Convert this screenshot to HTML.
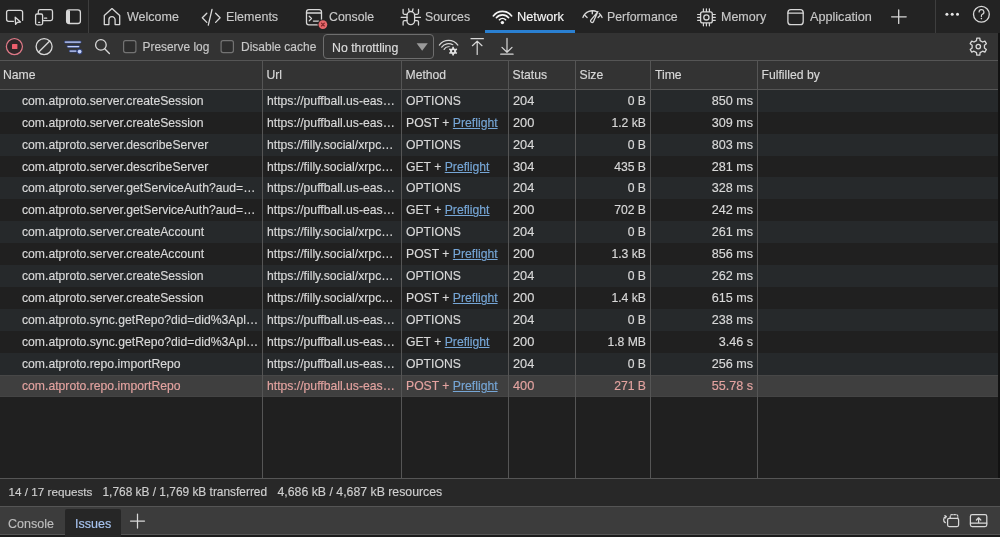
<!DOCTYPE html>
<html><head><meta charset="utf-8">
<style>
*{box-sizing:border-box;margin:0;padding:0}
html,body{width:1000px;height:537px;overflow:hidden;background:#202020;font-family:"Liberation Sans",sans-serif;color:#d9d9d9}
#wrap{position:absolute;left:0;top:0;width:1000px;height:537px;will-change:transform}
.abs{position:absolute}
svg{position:absolute;left:0;top:0;overflow:visible}
.t{position:absolute;font-size:12.5px;color:#c8c8c8;white-space:nowrap;line-height:14px;-webkit-text-stroke:0.15px currentColor}
#tabbar{position:absolute;left:0;top:0;width:1000px;height:33px;background:#232323}
#toolbar{position:absolute;left:0;top:33px;width:1000px;height:27px;background:#333333}
#hdr{position:absolute;left:0;top:60px;width:1000px;height:30px;background:#333333;border-top:1px solid #555555;border-bottom:1px solid #555555}
.row{position:absolute;left:0;width:1000px;height:21.97px}
.odd{background:#26292b}
.even{background:#202020}
.sel{background:#3f3f3f;box-shadow:inset 0 1px 0 #474747,inset 0 -1px 0 #444}
.c{position:absolute;top:0;height:22px;line-height:22px;font-size:12.2px;color:#d9d9d9;white-space:nowrap;-webkit-text-stroke:0.15px currentColor}
.hc{position:absolute;top:0;height:27px;line-height:28px;font-size:12.2px;color:#d9d9d9;white-space:nowrap;-webkit-text-stroke:0.15px currentColor}
.r{text-align:right}
.n{font-size:12.8px}
.sel .c{color:#e3a3a0}
.lnk{color:#76a6d6;text-decoration:underline;text-underline-offset:1px}
.vsep{position:absolute;top:60px;width:1px;height:418px;background:#555555}
#status{position:absolute;left:0;top:478px;width:1000px;height:28px;background:#282828;border-top:1px solid #555555}
#drawer{position:absolute;left:0;top:506px;width:1000px;height:31px;background:#3c3c3c;border-top:1px solid #555555}
</style></head><body><div id="wrap">
<div id="tabbar"></div>
<div id="toolbar"></div>
<div id="hdr">
  <div class="hc" style="left:3px">Name</div>
  <div class="hc" style="left:266.5px">Url</div>
  <div class="hc" style="left:405.5px">Method</div>
  <div class="hc" style="left:512.5px">Status</div>
  <div class="hc" style="left:579.5px">Size</div>
  <div class="hc" style="left:655px">Time</div>
  <div class="hc" style="left:761.5px">Fulfilled by</div>
</div>
<div class="row odd" style="top:89.6px"><div class="c" style="left:22px">com.atproto.server.createSession</div><div class="c" style="left:267px">https://puffball.us-eas…</div><div class="c" style="left:406px">OPTIONS</div><div class="c n" style="left:513px">204</div><div class="c r" style="left:576px;width:70px">0 B</div><div class="c r" style="left:651px;width:102px;font-size:12.6px">850 ms</div></div>
<div class="row even" style="top:111.57px"><div class="c" style="left:22px">com.atproto.server.createSession</div><div class="c" style="left:267px">https://puffball.us-eas…</div><div class="c" style="left:406px">POST + <span class="lnk">Preflight</span></div><div class="c n" style="left:513px">200</div><div class="c r" style="left:576px;width:70px">1.2 kB</div><div class="c r" style="left:651px;width:102px;font-size:12.6px">309 ms</div></div>
<div class="row odd" style="top:133.54px"><div class="c" style="left:22px">com.atproto.server.describeServer</div><div class="c" style="left:267px">https://filly.social/xrpc…</div><div class="c" style="left:406px">OPTIONS</div><div class="c n" style="left:513px">204</div><div class="c r" style="left:576px;width:70px">0 B</div><div class="c r" style="left:651px;width:102px;font-size:12.6px">803 ms</div></div>
<div class="row even" style="top:155.51px"><div class="c" style="left:22px">com.atproto.server.describeServer</div><div class="c" style="left:267px">https://filly.social/xrpc…</div><div class="c" style="left:406px">GET + <span class="lnk">Preflight</span></div><div class="c n" style="left:513px">304</div><div class="c r" style="left:576px;width:70px">435 B</div><div class="c r" style="left:651px;width:102px;font-size:12.6px">281 ms</div></div>
<div class="row odd" style="top:177.48px"><div class="c" style="left:22px">com.atproto.server.getServiceAuth?aud=…</div><div class="c" style="left:267px">https://puffball.us-eas…</div><div class="c" style="left:406px">OPTIONS</div><div class="c n" style="left:513px">204</div><div class="c r" style="left:576px;width:70px">0 B</div><div class="c r" style="left:651px;width:102px;font-size:12.6px">328 ms</div></div>
<div class="row even" style="top:199.45px"><div class="c" style="left:22px">com.atproto.server.getServiceAuth?aud=…</div><div class="c" style="left:267px">https://puffball.us-eas…</div><div class="c" style="left:406px">GET + <span class="lnk">Preflight</span></div><div class="c n" style="left:513px">200</div><div class="c r" style="left:576px;width:70px">702 B</div><div class="c r" style="left:651px;width:102px;font-size:12.6px">242 ms</div></div>
<div class="row odd" style="top:221.42px"><div class="c" style="left:22px">com.atproto.server.createAccount</div><div class="c" style="left:267px">https://filly.social/xrpc…</div><div class="c" style="left:406px">OPTIONS</div><div class="c n" style="left:513px">204</div><div class="c r" style="left:576px;width:70px">0 B</div><div class="c r" style="left:651px;width:102px;font-size:12.6px">261 ms</div></div>
<div class="row even" style="top:243.39px"><div class="c" style="left:22px">com.atproto.server.createAccount</div><div class="c" style="left:267px">https://filly.social/xrpc…</div><div class="c" style="left:406px">POST + <span class="lnk">Preflight</span></div><div class="c n" style="left:513px">200</div><div class="c r" style="left:576px;width:70px">1.3 kB</div><div class="c r" style="left:651px;width:102px;font-size:12.6px">856 ms</div></div>
<div class="row odd" style="top:265.36px"><div class="c" style="left:22px">com.atproto.server.createSession</div><div class="c" style="left:267px">https://filly.social/xrpc…</div><div class="c" style="left:406px">OPTIONS</div><div class="c n" style="left:513px">204</div><div class="c r" style="left:576px;width:70px">0 B</div><div class="c r" style="left:651px;width:102px;font-size:12.6px">262 ms</div></div>
<div class="row even" style="top:287.33px"><div class="c" style="left:22px">com.atproto.server.createSession</div><div class="c" style="left:267px">https://filly.social/xrpc…</div><div class="c" style="left:406px">POST + <span class="lnk">Preflight</span></div><div class="c n" style="left:513px">200</div><div class="c r" style="left:576px;width:70px">1.4 kB</div><div class="c r" style="left:651px;width:102px;font-size:12.6px">615 ms</div></div>
<div class="row odd" style="top:309.3px"><div class="c" style="left:22px">com.atproto.sync.getRepo?did=did%3Apl…</div><div class="c" style="left:267px">https://puffball.us-eas…</div><div class="c" style="left:406px">OPTIONS</div><div class="c n" style="left:513px">204</div><div class="c r" style="left:576px;width:70px">0 B</div><div class="c r" style="left:651px;width:102px;font-size:12.6px">238 ms</div></div>
<div class="row even" style="top:331.27px"><div class="c" style="left:22px">com.atproto.sync.getRepo?did=did%3Apl…</div><div class="c" style="left:267px">https://puffball.us-eas…</div><div class="c" style="left:406px">GET + <span class="lnk">Preflight</span></div><div class="c n" style="left:513px">200</div><div class="c r" style="left:576px;width:70px">1.8 MB</div><div class="c r" style="left:651px;width:102px;font-size:12.6px">3.46 s</div></div>
<div class="row odd" style="top:353.24px"><div class="c" style="left:22px">com.atproto.repo.importRepo</div><div class="c" style="left:267px">https://puffball.us-eas…</div><div class="c" style="left:406px">OPTIONS</div><div class="c n" style="left:513px">204</div><div class="c r" style="left:576px;width:70px">0 B</div><div class="c r" style="left:651px;width:102px;font-size:12.6px">256 ms</div></div>
<div class="row sel" style="top:375.21px"><div class="c" style="left:22px">com.atproto.repo.importRepo</div><div class="c" style="left:267px">https://puffball.us-eas…</div><div class="c" style="left:406px">POST + <span class="lnk">Preflight</span></div><div class="c n" style="left:513px">400</div><div class="c r" style="left:576px;width:70px">271 B</div><div class="c r" style="left:651px;width:102px;font-size:12.6px">55.78 s</div></div>
<div class="vsep" style="left:262px"></div>
<div class="vsep" style="left:401px"></div>
<div class="vsep" style="left:508px"></div>
<div class="vsep" style="left:575px"></div>
<div class="vsep" style="left:650px"></div>
<div class="vsep" style="left:757px"></div>
<div class="abs" style="left:998px;top:33px;width:2px;height:445px;background:#121212"></div>
<div id="status">
  <div class="t" style="left:8.5px;top:6px;font-size:11.7px;color:#cfcfcf">14 / 17 requests</div>
  <div class="t" style="left:102.5px;top:6px;font-size:11.9px;color:#cfcfcf">1,768 kB / 1,769 kB transferred</div>
  <div class="t" style="left:277.5px;top:6px;font-size:12.3px;color:#cfcfcf">4,686 kB / 4,687 kB resources</div>
</div>
<div id="drawer">
  <div class="abs" style="left:0;top:27px;width:1000px;height:1px;background:#555"></div>
  <div class="abs" style="left:0;top:28px;width:1000px;height:3px;background:#1c1c1c"></div>
  <div class="abs" style="left:65px;top:2px;width:56px;height:29px;background:#262626;border-radius:2px 2px 0 0"></div>
  <div class="t" style="left:8px;top:10px;color:#bdbdbd">Console</div>
  <div class="t" style="left:75px;top:10px;color:#a8c4f0">Issues</div>
</div>
<!-- tab bar content -->
<div class="abs" style="left:88px;top:0;width:1px;height:33px;background:#3e3e3e"></div>
<div class="abs" style="left:935px;top:0;width:1px;height:33px;background:#3e3e3e"></div>
<div class="t" style="left:127px;top:10px">Welcome</div>
<div class="t" style="left:226px;top:10px">Elements</div>
<div class="t" style="left:329px;top:10px;font-size:12.3px">Console</div>
<div class="t" style="left:425px;top:10px;font-size:12.3px">Sources</div>
<div class="t" style="left:517px;top:10px;color:#f4f4f4;font-size:12.8px">Network</div>
<div class="t" style="left:607px;top:10px;font-size:12.35px">Performance</div>
<div class="t" style="left:721px;top:10px">Memory</div>
<div class="t" style="left:810px;top:10px;font-size:12.65px">Application</div>
<div class="abs" style="left:485px;top:30px;width:90px;height:3px;background:#2a80d2"></div>
<!-- toolbar content -->
<div class="t" style="left:142.5px;top:40px;font-size:11.9px">Preserve log</div>
<div class="t" style="left:241px;top:40px;font-size:12px">Disable cache</div>
<div class="abs" style="left:323px;top:34px;width:111px;height:25px;border:1px solid #6e6e6e;border-radius:4px"></div>
<div class="t" style="left:332px;top:40.5px;color:#dedede;font-size:12.3px">No throttling</div>
<svg width="1000" height="33" viewBox="0 0 1000 33" fill="none" stroke="#d8d8d8" stroke-width="1.3" stroke-linecap="round" stroke-linejoin="round">
<path d="M13.5 21.3H8.6a2 2 0 0 1-2-2v-7a2 2 0 0 1 2-2h12a2 2 0 0 1 2 2v8"/>
<path d="M15.2 17.2l0.4 7.2 1.9-2.1 3-0.3z"/>
<rect x="38.3" y="9.6" width="14.2" height="11" rx="1.8"/>
<rect x="35.6" y="14" width="7" height="10.8" rx="1.5" fill="#232323"/>
<path d="M38.6 22.3h1.2M44.5 18.2h2.2"/>
<rect x="66.6" y="9.9" width="13.8" height="13.6" rx="2.5"/>
<rect x="67" y="10.4" width="3" height="12.6" fill="#d8d8d8" stroke="none"/>
<path d="M104.3 15.6l7.7-7 7.7 7v9h-4.6v-4.8a3.1 3.1 0 0 0-6.2 0v4.8h-4.6z"/>
<path d="M206.8 13.2l-4.5 4.6 4.5 4.6M215.6 13.2l4.5 4.6-4.5 4.6M212 9.5l-3.7 15.6"/>
<rect x="306.5" y="9.6" width="15" height="15.3" rx="2.3"/>
<path d="M306.5 13h15M309.2 16.3l2.3 2.2-2.3 2.4M313.4 21.1h5.2"/>
<path d="M407 15.3a3.8 3.8 0 0 1 7.6 0v5.5a3.8 3.8 0 0 1-7.6 0z"/>
<path d="M408.6 8.8l0.6 2.6M413 8.8l-0.6 2.6M407 14.3h-2.5a1.4 1.4 0 0 1-1.4-1.4v-3.4M414.6 14.3h2.5a1.4 1.4 0 0 0 1.4-1.4v-3.4M401.2 17.4h5.8M414.6 17.4h5.8M407 20.6h-2.5a1.4 1.4 0 0 0-1.4 1.4v3M414.6 20.6h2.5a1.4 1.4 0 0 1 1.4 1.4v3"/>
<g stroke="#f4f4f4" stroke-width="1.6">
<path d="M493.32 15.98A11.5 11.5 0 0 1 511.68 15.98"/>
<path d="M496.37 17.76A8.0 8.0 0 0 1 508.63 17.76"/>
<path d="M499.39 19.79A4.4 4.4 0 0 1 505.61 19.79"/>
</g>
<circle cx="502.4" cy="22.6" r="1.7" fill="#f4f4f4" stroke="none"/>
<path d="M582.92 17.51A10.2 10.2 0 0 1 597.29 11.99"/>
<path d="M599.33 13.42A10.2 10.2 0 0 1 602.08 17.51"/>
<path d="M584.8 15.3l2.3 2.2M592.3 10.8v3M600.4 15.3l-2.3 2.2"/>
<path d="M597.9 11.6L590.6 20.3A1.7 1.7 0 0 0 593.3 22.1Z"/>
<rect x="700.6" y="11.9" width="11.7" height="11" rx="2"/>
<circle cx="706.4" cy="17.4" r="2.6"/>
<path d="M703.4 8.8v2.6M706.4 8.8v2.6M709.4 8.8v2.6M703.4 23.4v2.4M706.4 23.4v2.4M709.4 23.4v2.4M697.6 14.5h2.6M697.6 17.4h2.6M697.6 20.3h2.6M712.7 14.5h2.6M712.7 17.4h2.6M712.7 20.3h2.6" stroke-width="1.2"/>
<rect x="787.9" y="9.7" width="15.3" height="15" rx="3"/>
<path d="M787.9 13.1h15.3"/>
<path d="M898.7 10v13.4M891.6 16.8h14.6" stroke-width="1.3"/>
<circle cx="981.4" cy="14.3" r="7.9"/>
<path d="M979.1 12a2.4 2.4 0 1 1 3.3 2.2c-.7.3-1 .8-1 1.5v.7" stroke-width="1.2"/>
<circle cx="981.4" cy="18.6" r=".8" fill="#d8d8d8" stroke="none"/>
<circle cx="322.9" cy="24.6" r="5.3" fill="#232323" stroke="none"/>
<circle cx="322.9" cy="24.6" r="4.4" fill="#e5676a" stroke="none"/>
<path d="M321.5 23.2l2.8 2.8M324.3 23.2l-2.8 2.8" stroke="#7a2326" stroke-width="1.1"/>
<g fill="#e6e6e6" stroke="none"><circle cx="946.9" cy="14.2" r="1.5"/><circle cx="952.2" cy="14.2" r="1.5"/><circle cx="957.5" cy="14.2" r="1.5"/></g>
</svg>
<svg width="1000" height="60" viewBox="0 0 1000 60" fill="none" stroke="#d8d8d8" stroke-width="1.3" stroke-linecap="round" stroke-linejoin="round">
<circle cx="14.4" cy="46.6" r="8" stroke="#de7886" stroke-width="1.3"/>
<circle cx="14.4" cy="46.6" r="7" fill="#2f2628" stroke="none"/>
<rect x="12" y="43.9" width="5.4" height="5.2" rx=".6" fill="#ec5e6c" stroke="none"/>
<circle cx="44.1" cy="46.6" r="8"/>
<path d="M38.5 52.2l11.2-11.2"/>
<g stroke="#34447c" stroke-width="2.8">
<path d="M65.4 42.1h14.8M68 46.6h10.6M70.2 51.1h5.6"/>
</g>
<circle cx="79.6" cy="51.6" r="2.9" fill="#34447c" stroke="none"/>
<g stroke="#c3d0f8" stroke-width="1.4">
<path d="M65.4 42.1h14.8M68 46.6h10.6M70.2 51.1h5.6"/>
</g>
<circle cx="79.6" cy="51.6" r="1.9" fill="#c3d0f8" stroke="none"/>
<circle cx="100.9" cy="44.9" r="5.3"/>
<path d="M104.7 48.7l4.7 4.8"/>
<rect x="123.6" y="40.7" width="12.3" height="11.9" rx="2" stroke="#737373" stroke-width="1.2" fill="#2d2d2d"/>
<rect x="221.1" y="40.7" width="12.3" height="11.9" rx="2" stroke="#737373" stroke-width="1.2" fill="#2d2d2d"/>
<path d="M416.6 43.2h11.2l-5.6 7.6z" fill="#9a9a9a" stroke="none"/>
<path d="M439.34 45.02A11.6 11.6 0 0 1 457.86 45.02" stroke-width="1.2"/>
<path d="M441.72 47.18A8.4 8.4 0 0 1 452.80 44.73" stroke-width="1.2"/>
<path d="M444.10 49.40A5.2 5.2 0 0 1 449.95 46.98" stroke-width="1.2"/>
<circle cx="453.1" cy="51.2" r="5.6" fill="#333333" stroke="none"/>
<path d="M452.33 46.87 L453.87 46.87 L454.00 48.23 L455.22 48.94 L456.46 48.36 L457.24 49.70 L456.12 50.50 L456.12 51.90 L457.24 52.70 L456.46 54.04 L455.22 53.46 L454.00 54.17 L453.87 55.53 L452.33 55.53 L452.20 54.17 L450.98 53.46 L449.74 54.04 L448.96 52.70 L450.08 51.90 L450.08 50.50 L448.96 49.70 L449.74 48.36 L450.98 48.94 L452.20 48.23Z" fill="#e0e0e0" stroke="none"/>
<circle cx="453.1" cy="51.2" r="1.1" fill="#333333" stroke="none"/>
<path d="M471 38.7h12.4M477.2 41.5v13M472.4 45.7l4.8-4.6 4.8 4.6" stroke-width="1.2"/>
<path d="M500.7 54.2h12.4M507 38.4v13.8M502 47.4l5 4.9 5-4.9" stroke-width="1.2"/>
<path d="M976.79 38.13 L979.81 38.13 L980.13 40.57 L982.61 42.00 L984.88 41.06 L986.39 43.68 L984.44 45.17 L984.44 48.03 L986.39 49.52 L984.88 52.14 L982.61 51.20 L980.13 52.63 L979.81 55.07 L976.79 55.07 L976.47 52.63 L973.99 51.20 L971.72 52.14 L970.21 49.52 L972.16 48.03 L972.16 45.17 L970.21 43.68 L971.72 41.06 L973.99 42.00 L976.47 40.57Z" stroke-width="1.3"/>
<circle cx="978.3" cy="46.6" r="2.2" stroke-width="1.3"/>
</svg>
<svg width="1000" height="537" viewBox="0 0 1000 537" fill="none" stroke="#d8d8d8" stroke-width="1.25" stroke-linecap="round" stroke-linejoin="round">
<path d="M137.5 514v14M130.5 521h14"/>
<rect x="947.6" y="518.3" width="11" height="8.2" rx="1.5"/>
<path d="M950.2 518v-1.8a1.5 1.5 0 0 1 1.5-1.5h4.6a1.5 1.5 0 0 1 1.5 1.5V518" stroke-dasharray="1.6 1.4"/>
<path d="M945.3 522.6a3.3 3.3 0 0 1 0.4-5.9"/>
<path d="M944.8 515.6l1.6 0.9-0.9 1.6" stroke-width="1.1"/>
<rect x="970.4" y="514.6" width="16.4" height="11.9" rx="1.8"/>
<path d="M970.4 523h16.4M978.6 523v-5M976.4 520l2.2-2.2 2.2 2.2"/>
</svg>
</div></body></html>
